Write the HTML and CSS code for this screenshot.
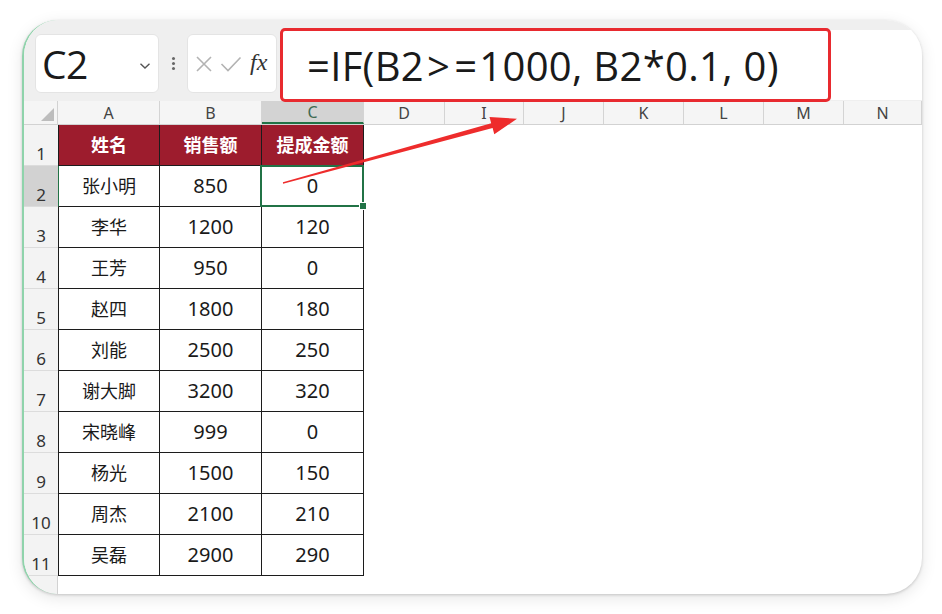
FILE: index.html
```html
<!DOCTYPE html>
<html lang="zh-CN">
<head>
<meta charset="utf-8">
<title>IF</title>
<link rel="stylesheet" href="styles.css">
</head>
<body>
<div class="page">
  <div class="card">
    <div class="toolbar">
      <div class="namebox">
        <span class="ref">C2</span>
        <svg class="chev" width="12" height="8" viewBox="0 0 12 8"><path d="M1.5 1.8 L6 6 L10.5 1.8" fill="none" stroke="#555" stroke-width="1.4"/></svg>
      </div>
      <div class="dots"><i></i><i></i><i></i></div>
      <div class="fnbox">
        <svg width="18" height="18" viewBox="0 0 18 18"><path d="M2 2 L16 16 M16 2 L2 16" stroke="#b3b3b3" stroke-width="1.6" fill="none"/></svg>
        <svg width="22" height="18" viewBox="0 0 22 18"><path d="M1.5 9 L8 15.5 L20.5 2.5" stroke="#b3b3b3" stroke-width="1.6" fill="none"/></svg>
        <span class="fx">fx</span>
      </div>
      <div class="formula">=IF(B2<span class="gt">&gt;</span><span class="eq">=</span>1000, B2*0.1, 0)</div>
    </div>
    <div class="colheads">
      <div class="corner"><span class="tri"></span></div>
      <div class="ch w102">A</div>
      <div class="ch w102">B</div>
      <div class="ch w102 selcol">C</div>
      <div class="ch w81">D</div>
      <div class="ch w79">I</div>
      <div class="ch w80">J</div>
      <div class="ch w80">K</div>
      <div class="ch w80">L</div>
      <div class="ch w80">M</div>
      <div class="ch grow">N</div>
    </div>
    <div class="sheet">
      <div class="rh">1</div><div class="c a hd">姓名</div><div class="c hd">销售额</div><div class="c hd">提成金额</div><div class="fill"></div>
      <div class="rh selrow">2</div><div class="c a sa">张小明</div><div class="c">850</div><div class="c sel">0</div><div class="fill"></div>
      <div class="rh">3</div><div class="c a">李华</div><div class="c">1200</div><div class="c">120</div><div class="fill"></div>
      <div class="rh">4</div><div class="c a">王芳</div><div class="c">950</div><div class="c">0</div><div class="fill"></div>
      <div class="rh">5</div><div class="c a">赵四</div><div class="c">1800</div><div class="c">180</div><div class="fill"></div>
      <div class="rh">6</div><div class="c a">刘能</div><div class="c">2500</div><div class="c">250</div><div class="fill"></div>
      <div class="rh">7</div><div class="c a">谢大脚</div><div class="c">3200</div><div class="c">320</div><div class="fill"></div>
      <div class="rh">8</div><div class="c a">宋晓峰</div><div class="c">999</div><div class="c">0</div><div class="fill"></div>
      <div class="rh">9</div><div class="c a">杨光</div><div class="c">1500</div><div class="c">150</div><div class="fill"></div>
      <div class="rh">10</div><div class="c a">周杰</div><div class="c">2100</div><div class="c">210</div><div class="fill"></div>
      <div class="rh">11</div><div class="c a">吴磊</div><div class="c">2900</div><div class="c">290</div><div class="fill"></div>
      <div class="rh empty"></div><div class="e"></div><div class="e"></div><div class="e"></div><div class="fill"></div>
    </div>
  </div>
  <div class="redbox"></div>
  <svg class="arrow" width="942" height="614" viewBox="0 0 942 614">
    <polygon points="282.9,182.3 491.2,123.2 489.5,116.9 517,118.8 494.3,134.3 492.6,128.0 283.1,183.7" fill="#ee2c2c"/>
  </svg>
</div>
</body>
</html>
```

FILE: styles.css
```css
* { box-sizing: border-box; }
html, body { margin: 0; padding: 0; background: #ffffff; }
body { font-family: "Noto Sans", "Noto Sans CJK SC", sans-serif; color: #1a1a1a; }

.page {
  position: relative;
  width: 942px;
  height: 614px;
  padding: 20px 20px 20px 22px;
}

.card {
  height: 574px;
  border-radius: 36px;
  overflow: hidden;
  background: #ffffff;
  border-left: 2px solid #8fd3ab;
  box-shadow: 0 1px 3px rgba(0,0,0,0.18), 0 4px 16px rgba(0,0,0,0.10);
  display: flex;
  flex-direction: column;
}

/* ---------- toolbar ---------- */
.toolbar {
  height: 81px;
  flex: none;
  background: #efefef;
  display: flex;
  align-items: flex-start;
  padding: 10px 0 0 11px;
}
.namebox {
  margin-top: 4px;
  width: 124px;
  height: 59px;
  background: #ffffff;
  border-radius: 6px;
  border: 1px solid #e4e4e4;
  display: flex;
  align-items: center;
  justify-content: space-between;
  padding: 0 7px 0 6px;
}
.ref {
  font-family: "Open Sans", "Noto Sans", sans-serif;
  font-size: 39px;
  line-height: 1;
  color: #1a1a1a;
  letter-spacing: -0.5px;
}
.chev { margin-top: 4px; }
.dots {
  width: 28px;
  height: 59px;
  margin-top: 4px;
  display: flex;
  flex-direction: column;
  align-items: center;
  justify-content: center;
  gap: 2px;
}
.dots i {
  display: block;
  width: 3px;
  height: 3px;
  border-radius: 50%;
  background: #666;
}
.fnbox {
  margin-top: 4px;
  width: 90px;
  height: 59px;
  background: #ffffff;
  border-radius: 6px;
  border: 1px solid #e4e4e4;
  display: flex;
  align-items: center;
  padding-left: 7px;
  gap: 7px;
}
.fx {
  font-family: "Liberation Serif", serif;
  font-style: italic;
  font-size: 24px;
  color: #333;
  margin-left: 1px;
  margin-top: -2px;
}
.formula {
  flex: 1;
  margin-left: 3px;
  height: 70px;
  background: #ffffff;
  display: flex;
  align-items: center;
  padding-left: 27px;
  font-family: "Open Sans", "Noto Sans", sans-serif;
  font-size: 40px;
  color: #1a1a1a;
  letter-spacing: 0.3px;
  white-space: pre;
}
.gt { margin: 0 4px 0 3px; }
.eq { margin-right: 2px; }

/* ---------- column headers ---------- */
.colheads {
  height: 24px;
  flex: none;
  display: flex;
  background: #f5f5f5;
  border-bottom: 1px solid #d2d2d2;
}
.corner {
  width: 34px;
  position: relative;
  border-right: 1px solid #d2d2d2;
}
.tri {
  position: absolute;
  right: 3px;
  bottom: 3px;
  width: 0;
  height: 0;
  border-left: 13px solid transparent;
  border-bottom: 13px solid #bdbdbd;
}
.ch {
  border-right: 1px solid #d4d4d4;
  font-size: 16px;
  color: #444;
  display: flex;
  align-items: center;
  justify-content: center;
  line-height: 1;
}
.w102 { width: 102px; }
.w81 { width: 81px; }
.w79 { width: 79px; }
.w80 { width: 80px; }
.grow { flex: 1; }
.selcol {
  background: #d3d3d3;
  border-bottom: 2px solid #217346;
  color: #3e6a52;
}

/* ---------- sheet ---------- */
.sheet {
  flex: 1;
  display: grid;
  grid-template-columns: 34px 102px 102px 102px 1fr;
  grid-auto-rows: 41px;
  overflow: hidden;
}
.rh {
  background: #f3f3f3;
  border-bottom: 1px solid #dcdcdc;
  display: flex;
  align-items: flex-end;
  justify-content: center;
  padding-bottom: 3px;
  font-size: 17px;
  color: #333;
  line-height: 1;
}
.rh.empty { border-right: 1px solid #d2d2d2; border-bottom: none; }
.rh.selrow { background: #d2d2d2; }
.c {
  border-right: 1px solid #1c1c1c;
  border-bottom: 1px solid #1c1c1c;
  display: flex;
  align-items: center;
  justify-content: center;
  font-size: 20px;
  color: #1a1a1a;
  line-height: 1;
}
.c.a { border-left: 1px solid #1c1c1c; font-size: 18px; }
.c.sa { border-left-color: #217346; }
.c.hd {
  background: #9d1c2d;
  color: #ffffff;
  font-weight: 700;
  font-size: 18px;
}
.sel { position: relative; }
.sel::after {
  content: "";
  position: absolute;
  left: -2px;
  top: -1px;
  right: -1px;
  bottom: -1px;
  border: 2px solid #217346;
}
.sel::before {
  content: "";
  position: absolute;
  right: -4px;
  bottom: -4px;
  width: 6px;
  height: 6px;
  background: #217346;
  border: 1px solid #ffffff;
  z-index: 2;
}

/* ---------- annotations ---------- */
.redbox {
  position: absolute;
  left: 280px;
  top: 28px;
  width: 551px;
  height: 74px;
  border: 3px solid #e82a2f;
  border-radius: 5px;
}
.arrow {
  position: absolute;
  left: 0;
  top: 0;
  pointer-events: none;
}
```
